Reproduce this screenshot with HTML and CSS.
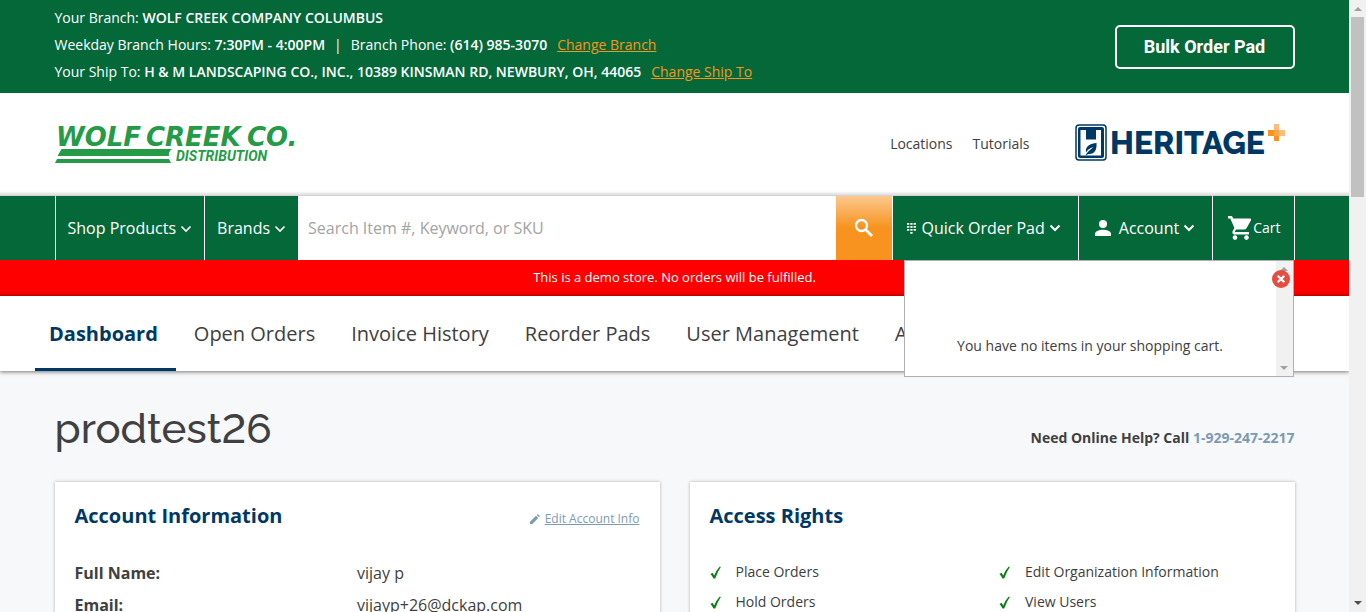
FILE: index.html
```html
<!DOCTYPE html>
<html lang="en">
<head>
<meta charset="utf-8">
<meta name="viewport" content="width=device-width, initial-scale=1">
<title>Dashboard</title>
<link rel="stylesheet" href="styles.css">
</head>
<body>
<div class="page">
  <div class="topbar">
    <div class="container topbar-inner">
      <div class="branch">
        <p class="branch-row">Your Branch: <b>WOLF CREEK COMPANY COLUMBUS</b></p>
        <p class="branch-row">Weekday Branch Hours: <b>7:30PM - 4:00PM</b><span class="sep">|</span>Branch Phone: <b>(614) 985-3070</b><a class="change" href="#branch">Change Branch</a></p>
        <p class="branch-row">Your Ship To: <b>H &amp; M LANDSCAPING CO., INC., 10389 KINSMAN RD, NEWBURY, OH, 44065</b><a class="change" href="#ship">Change Ship To</a></p>
      </div>
      <button class="bulk" type="button">Bulk Order Pad</button>
    </div>
  </div>

  <header class="header">
    <div class="container header-inner">
      <a class="logo" href="#home" aria-label="Wolf Creek Co. Distribution">
        <svg width="250" height="62" viewBox="0 -10 250 62">
          <g class="wolf">
            <text x="1" y="23">WOLF</text>
            <text x="91" y="23">CREEK</text>
            <text x="192" y="23">CO.</text>
          </g>
          <path fill="#259b48" d="M6.500 26H117q-4 3-3 7H2.500zM2 36H114l2 4H0z"/>
          <text class="wolf-sub" x="121" y="38">DISTRIBUTION</text>
        </svg>
      </a>
      <nav class="links">
        <a href="#locations">Locations</a>
        <a href="#tutorials">Tutorials</a>
      </nav>
      <a class="heritage" href="#heritage" aria-label="Heritage Plus">
        <svg width="214" height="62" viewBox="0 -9 214 62">
          <rect x="1" y="3" width="30" height="35" rx="3" fill="#fff" stroke="#003865" stroke-width="1.500"/>
          <rect x="3" y="5" width="26" height="31" rx="2" fill="#003865"/>
          <path fill="#fff" d="M5.500 8h5.500v9.500h10V8H26v25.500H5.500z"/>
          <path fill="#003865" d="M21.500 21c.5 7-2 11.500-8 11l-3 1.500c1-3 5-6 8-8.500-4 1-6 3-7.500 5.500C10 24 15.500 21.500 21.500 21z"/>
          <text class="heritage-word" x="35" y="32">HERITAGE</text>
          <path fill="#fbbf7d" d="M199 2h5v6h6v6h-6v5h-5z"/>
          <path fill="#f8931e" d="M193 8h6v6h-6zM199 14h5v5h-5z"/>
          <path fill="#f9a64a" d="M199 8h5v6h-5z"/>
        </svg>
      </a>
    </div>
  </header>

  <div class="navbar">
    <div class="container navbar-inner">
      <button class="nav-item" type="button">Shop Products<svg class="chev" width="12" height="8" viewBox="0 0 12 8"><path d="M1.500 1.500 6 6l4.500-4.500"/></svg></button>
      <button class="nav-item" type="button">Brands<svg class="chev" width="12" height="8" viewBox="0 0 12 8"><path d="M1.500 1.500 6 6l4.500-4.500"/></svg></button>
      <form class="search">
        <input class="search-input" type="text" aria-label="Search" placeholder="Search Item #, Keyword, or SKU">
        <button class="search-btn" type="button" aria-label="Search">
          <svg width="20" height="20" viewBox="0 0 20 20" fill="none" stroke="#fff" stroke-width="2.300"><circle cx="7.500" cy="7.500" r="5.500"/><path d="m11.500 11.500 6.500 6.500" stroke-width="2.800"/></svg>
        </button>
      </form>
      <button class="nav-item nav-quick" type="button">
        <svg class="grid-icon" width="9" height="13" viewBox="0 0 9 13" fill="#fff"><path d="M0 1h2.300v1.700H0zM3.300 1h2.300v1.700H3.300zM6.600 1h2.300v1.700H6.600zM0 4h2.300v1.700H0zM3.300 4h2.300v1.700H3.300zM6.600 4h2.300v1.700H6.600zM0 7h2.300v1.700H0zM3.300 7h2.300v1.700H3.300zM6.600 7h2.300v1.700H6.600zM3.300 10h2.300v1.700H3.300z"/></svg>Quick Order Pad<svg class="chev chev-bold" width="12" height="8" viewBox="0 0 12 8"><path d="M1.500 1.500 6 6l4.500-4.500"/></svg></button>
      <button class="nav-item nav-account" type="button">
        <svg class="user-icon" width="16" height="16" viewBox="0 0 16 16" fill="#fff"><circle cx="8" cy="4" r="4"/><path d="M0 16v-2.500C0 11 5 9.700 8 9.700s8 1.300 8 3.800V16z"/></svg>Account<svg class="chev chev-bold" width="12" height="8" viewBox="0 0 12 8"><path d="M1.500 1.500 6 6l4.500-4.500"/></svg></button>
      <div class="cart">
        <button class="nav-item nav-cart" type="button">
          <svg width="24" height="24" viewBox="0 0 24 24" fill="#fff"><path d="M0 0h4l1.200 2.500H22q1.600.2 1 1.700l-4.500 8q-.8 1.300-2.200 1.300H8l-1.200 2.200.3.400H21V18.500H7c-2 0-3.300-1.800-2.300-3.600l1.700-3L2.300 2.500H0zM7 19.300a2.300 2.300 0 1 1-.01 0zM18.500 19.300a2.300 2.300 0 1 1-.01 0z"/></svg>Cart</button>
        <div class="minicart">
          <p class="minicart-text">You have no items in your shopping cart.</p>
          <div class="mini-scroll"><i class="tri tri-up"></i><i class="tri tri-down"></i></div>
          <button class="close" type="button" aria-label="Close"><svg width="18" height="18" viewBox="0 0 18 18"><circle cx="9" cy="9" r="9" fill="#e74c41"/><path d="m5.700 5.700 6.600 6.600m0-6.600-6.600 6.600" stroke="#fff" stroke-width="2.300"/></svg></button>
        </div>
      </div>
    </div>
  </div>

  <p class="demo">This is a demo store. No orders will be fulfilled.</p>

  <nav class="tabs">
    <a class="tab tab-active" href="#dashboard">Dashboard</a>
    <a class="tab" href="#orders">Open Orders</a>
    <a class="tab" href="#invoices">Invoice History</a>
    <a class="tab" href="#pads">Reorder Pads</a>
    <a class="tab" href="#users">User Management</a>
    <a class="tab" href="#more">A</a>
  </nav>

  <main class="container main">
    <div class="title-row">
      <h1 class="title">prodtest26</h1>
      <p class="help">Need Online Help? Call <a href="tel:1-929-247-2217">1-929-247-2217</a></p>
    </div>
    <div class="cards">
      <section class="card">
        <div class="card-head">
          <h2>Account Information</h2>
          <a class="edit" href="#edit"><svg width="10" height="10" viewBox="0 0 10 10" fill="#7d9ab3"><path d="M0 10V7.700L6 1.700 8.300 4l-6 6zM6.800 1 7.800 0 10 2.200l-1 1z"/></svg><span>Edit Account Info</span></a>
        </div>
        <dl class="info">
          <dt>Full Name:</dt><dd>vijay p</dd>
          <dt>Email:</dt><dd>vijayp+26@dckap.com</dd>
        </dl>
      </section>
      <section class="card">
        <div class="card-head"><h2>Access Rights</h2></div>
        <ul class="rights">
          <li><svg class="tick" width="12" height="13" viewBox="0 0 12 13"><path d="M.5 8 2.500 6.700 4.200 9.500Q6.500 4 9.800.5L10.800 1Q7.500 6 5.200 12.500H3.500Q2.300 10 .5 8z"/></svg>Place Orders</li>
          <li><svg class="tick" width="12" height="13" viewBox="0 0 12 13"><path d="M.5 8 2.500 6.700 4.200 9.500Q6.500 4 9.800.5L10.800 1Q7.500 6 5.200 12.500H3.500Q2.300 10 .5 8z"/></svg>Edit Organization Information</li>
          <li><svg class="tick" width="12" height="13" viewBox="0 0 12 13"><path d="M.5 8 2.500 6.700 4.200 9.500Q6.500 4 9.800.5L10.800 1Q7.500 6 5.200 12.500H3.500Q2.300 10 .5 8z"/></svg>Hold Orders</li>
          <li><svg class="tick" width="12" height="13" viewBox="0 0 12 13"><path d="M.5 8 2.500 6.700 4.200 9.500Q6.500 4 9.800.5L10.800 1Q7.500 6 5.200 12.500H3.500Q2.300 10 .5 8z"/></svg>View Users</li>
        </ul>
      </section>
    </div>
  </main>
</div>
<div class="scrollbar"><i class="tri tri-up"></i><div class="thumb"></div><i class="tri tri-down tri-dark"></i></div>
</body>
</html>
```
FILE: styles.css
```css
* { box-sizing: border-box; margin: 0; padding: 0; }
body {
  display: flex;
  height: 100vh;
  overflow: hidden;
  background: #f7f8fa;
  color: #404040;
  font: 14px/20px "Open Sans", "Noto Sans", sans-serif;
}
button { font: inherit; color: inherit; background: none; border: 0; cursor: pointer; }
a { color: inherit; text-decoration: none; }
svg { display: block; flex: none; }
.page { flex: 1; min-width: 0; }
.container { max-width: 1240px; margin: 0 auto; }

/* Branch bar */
.topbar { background: #056839; color: #fff; }
.topbar-inner { display: flex; justify-content: space-between; align-items: center; }
.branch { padding: 4px 0 8px; }
.branch-row { line-height: 27px; }
.branch-row b { font-weight: 600; }
.sep { margin: 0 9px; }
.change { margin-left: 10px; color: #f7941d; text-decoration: underline; }
.bulk {
  width: 180px;
  height: 44px;
  border: 2px solid #fff;
  border-radius: 5px;
  font: 700 18px/24px Roboto, sans-serif;
}

/* Logos and links */
.header { background: linear-gradient(to top, #dcdcdc, #fff 4px); border-bottom: 1px solid #d4d4d4; }
.header-inner { display: flex; align-items: center; height: 102px; padding-right: 6px; }
.logo { margin-right: auto; }
.wolf text { font: italic 700 26px "DejaVu Sans", sans-serif; fill: #259b48; }
.wolf-sub { font: italic 700 14px Roboto, sans-serif; fill: #259b48; }
.links { display: flex; gap: 20px; margin-right: 45px; }
.heritage-word { font: 800 32px Raleway, Lato, sans-serif; fill: #003865; }

/* Main navigation */
.navbar { background: #056839; color: #fff; }
.navbar-inner { display: flex; height: 64px; }
.nav-item {
  display: flex;
  align-items: center;
  height: 64px;
  padding: 0 12px;
  border-left: 1px solid #fff;
  font-size: 16px;
  white-space: nowrap;
}
.chev { margin: 2px 0 0 4px; fill: none; stroke: #fff; stroke-width: 1.6; }
.chev-bold { margin-top: 0; stroke-width: 2; }
.search { flex: 1; display: flex; min-width: 0; }
.search-input { flex: 1; min-width: 0; padding: 0 10px; border: 0; border-radius: 0; background: #fff; color: #404040; font: inherit; font-size: 16px; }
.search-input::placeholder { color: #a3a3a3; opacity: 1; }
.search-btn { display: flex; align-items: center; justify-content: center; width: 56px; background: linear-gradient(#fcc88e, #f7931e 50%); }
.nav-quick { padding: 0 17px 0 14px; }
.grid-icon { margin-right: 6px; }
.nav-account { padding: 0 17px 0 16px; }
.user-icon { margin-right: 8px; }
.cart { position: relative; }
.nav-cart { padding: 0 13px 0 15px; border-right: 1px solid #fff; font-size: 14px; gap: 1px; }
.minicart {
  position: absolute;
  z-index: 2;
  top: 64px;
  right: 1px;
  display: flex;
  width: 390px;
  height: 117px;
  border: 1px solid #b0b0b0;
  background: #fff;
  color: #404040;
}
.minicart-text { flex: 1; padding-top: 75px; text-align: center; }
.mini-scroll { display: flex; flex-direction: column; justify-content: space-between; align-items: center; width: 17px; padding: 6px 0; background: #f1f1f1; }
.close { position: absolute; top: 9px; right: 3px; }
.tri { border: 4px solid transparent; }
.tri-up { border-top: 0; border-bottom-color: #a0a0a0; }
.tri-down { border-bottom: 0; border-top-color: #a0a0a0; }
.tri-dark { border-top-color: #505050; }

/* Store notice */
.demo { height: 36px; background: linear-gradient(to top, #b40000, #e80000 2px, #f00 5px); color: #fff; font-size: 13px; line-height: 34px; text-align: center; }

/* Dashboard tabs */
.tabs { display: flex; padding-left: 35px; background: #fff; box-shadow: 0 1px 4px #777; clip-path: inset(0 0 -8px 0); }
.tab { height: 75px; padding: 0 18px; font-size: 20px; line-height: 75px; white-space: nowrap; }
.tab-active { padding-left: 14px; border-bottom: 3px solid #003865; color: #003865; font-weight: 700; }

/* Dashboard content */
.title-row { display: flex; justify-content: space-between; align-items: center; height: 111px; padding-top: 4px; }
.title { font: 500 42px/56px Raleway, Lato, sans-serif; font-variant-numeric: lining-nums; }
.help { padding-top: 18px; font-weight: 700; }
.help a { color: #7d9ab3; }
.cards { display: grid; grid-template-columns: 1fr 1fr; gap: 30px; }
.card { padding: 20px; background: #fff; box-shadow: 0 0 3px #aaa; }
.card-head { display: flex; justify-content: space-between; align-items: center; height: 28px; }
.card-head h2 { color: #003865; font-size: 20px; line-height: 28px; font-weight: 700; }
.edit { display: flex; align-items: center; gap: 5px; padding-top: 5px; color: #7d9ab3; font-size: 12px; }
.edit span { text-decoration: underline; }
.info { display: grid; grid-template-columns: 1fr 1fr; margin-top: 27px; font-size: 16px; line-height: 32px; }
.info dt { font-weight: 700; }
.rights { display: grid; grid-template-columns: 1fr 1fr; column-gap: 14px; margin-top: 27px; line-height: 30px; list-style: none; }
.rights li { display: flex; align-items: center; gap: 14px; }
.tick { fill: #0a7d12; }

/* Page scrollbar */
.scrollbar { display: flex; flex-direction: column; align-items: center; width: 17px; padding: 7px 0; background: #f1f1f1; }
.thumb { width: 13px; height: 180px; margin: 6px 0 auto; background: #c1c1c1; }
```
